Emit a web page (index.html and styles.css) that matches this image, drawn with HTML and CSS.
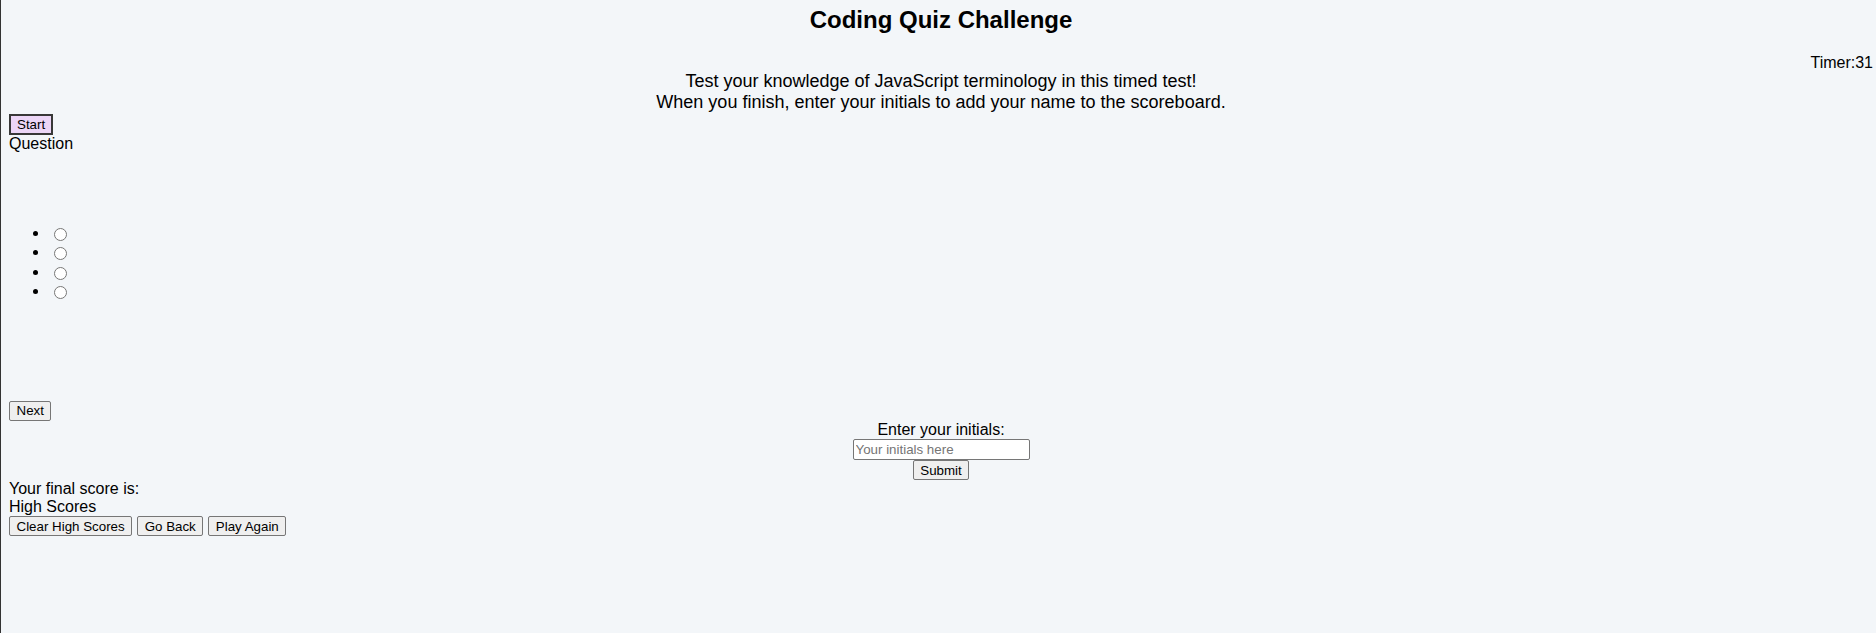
FILE: index.html
```html
<!DOCTYPE html>
<html lang="en">
<head>
<meta charset="utf-8">
<title>Coding Quiz Challenge</title>
<link rel="stylesheet" href="styles.css">
</head>
<body>
<header class="header">
  <h1 class="title">Coding Quiz Challenge</h1>
  <div class="timer">Timer:31</div>
</header>
<main class="main">
  <section class="intro">
    <p class="intro-text">Test your knowledge of JavaScript terminology in this timed test!<br>When you finish, enter your initials to add your name to the scoreboard.</p>
    <div class="start-row"><button class="start-btn" type="button">Start</button></div>
  </section>
  <section class="quiz">
    <div class="question">Question</div>
    <ul class="choices">
      <li><input class="choice-radio" type="radio" name="choice"><label></label></li>
      <li><input class="choice-radio" type="radio" name="choice"><label></label></li>
      <li><input class="choice-radio" type="radio" name="choice"><label></label></li>
      <li><input class="choice-radio" type="radio" name="choice"><label></label></li>
    </ul>
    <div class="next-row"><button class="btn" type="button">Next</button></div>
  </section>
  <section class="initials">
    <label class="initials-label" for="initials">Enter your initials:</label>
    <input class="initials-input" id="initials" type="text" placeholder="Your initials here">
    <button class="btn" type="button">Submit</button>
  </section>
  <section class="scores">
    <div class="score-line">Your final score is:</div>
    <div class="score-line">High Scores</div>
    <div class="score-actions">
      <button class="btn" type="button">Clear High Scores</button>
      <button class="btn" type="button">Go Back</button>
      <button class="btn" type="button">Play Again</button>
    </div>
  </section>
</main>
</body>
</html>
```

FILE: styles.css
```css
html {
  min-height: 100%;
  border-left: 1px solid #333333;
  background: #f3f6f9;
}

body {
  margin: 0 3px 0 8px;
  font-family: "Liberation Sans", Arial, sans-serif;
  font-size: 16px;
  color: #000000;
}

.header {
  display: flex;
  flex-direction: column;
}

.title {
  margin: 0;
  padding-top: 6px;
  font-size: 24px;
  font-weight: bold;
  line-height: 28px;
  text-align: center;
}

.timer {
  margin-top: 20px;
  text-align: right;
  line-height: 18px;
}

.intro-text {
  margin: -1px 0 0;
  font-size: 18px;
  line-height: 21px;
  text-align: center;
}

.start-row {
  margin-top: 1px;
  display: flex;
}

.start-btn {
  font-family: "Liberation Sans", Arial, sans-serif;
  font-size: 13.333px;
  line-height: normal;
  padding: 1px 6px;
  border: 2px solid #383838;
  border-radius: 0;
  background: #ecd6f7;
  color: #000000;
}

.question {
  line-height: normal;
}

.choices {
  margin: 71px 0 0;
  padding-left: 40px;
}

.choices li {
  height: 19.33px;
}

.choice-radio {
  margin: 4px 3px 0 5px;
  vertical-align: top;
}

.next-row {
  margin-top: 99.5px;
  display: flex;
}

.btn {
  box-sizing: border-box;
  height: 20px;
  font-family: "Liberation Sans", Arial, sans-serif;
  font-size: 13.333px;
  line-height: normal;
  padding: 1px 6.5px;
  border: 1px solid #767676;
  border-radius: 2px;
  background: #efefef;
  color: #000000;
}

.initials {
  display: flex;
  flex-direction: column;
  align-items: center;
}

.initials-label {
  line-height: normal;
}

.initials-input {
  box-sizing: border-box;
  width: 177px;
  height: 21px;
  margin-top: 0.5px;
  padding: 1px 2px;
  border: 1px solid #767676;
  border-radius: 2px;
  background: #ffffff;
  font-family: "Liberation Sans", Arial, sans-serif;
  font-size: 13.333px;
  color: #000000;
}

.initials-input::placeholder {
  color: #757575;
}

.score-line {
  line-height: normal;
}

.score-actions {
  display: flex;
  gap: 5px;
}
```
